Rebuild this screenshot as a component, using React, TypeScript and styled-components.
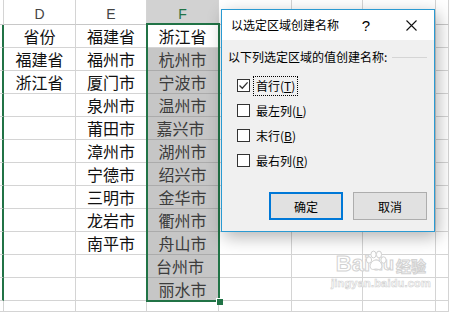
import React from 'react';
import styled, { createGlobalStyle } from 'styled-components';

const CJK = '"Noto Sans CJK SC", "Noto Sans", sans-serif';

const GlobalStyle = createGlobalStyle`
    html, body {
        margin: 0;
        padding: 0;
        background: #fff;
        overflow: hidden;
    }
`;

// G, H and I sit under the dialog, so their letters are not shown
const COLUMNS = ['', 'D', 'E', 'F', '', '', '', ''];

const D_VALUES = ['省份', '福建省', '浙江省'];
const E_VALUES = ['福建省', '福州市', '厦门市', '泉州市', '莆田市', '漳州市', '宁德市', '三明市', '龙岩市', '南平市'];
const F_VALUES = [
    { text: '浙江省', nudge: 0 },
    { text: '杭州市', nudge: 0 },
    { text: '宁波市', nudge: 0 },
    { text: '温州市', nudge: 0 },
    { text: '嘉兴市', nudge: 4 },
    { text: '湖州市', nudge: 0 },
    { text: '绍兴市', nudge: 0 },
    { text: '金华市', nudge: 0 },
    { text: '衢州市', nudge: 0 },
    { text: '舟山市', nudge: 0 },
    { text: '台州市', nudge: 5 },
    { text: '丽水市', nudge: 0 },
];

const CHECKS = [
    { label: '首行', key: 'T', checked: true, focused: true },
    { label: '最左列', key: 'L', checked: false, focused: false },
    { label: '末行', key: 'B', checked: false, focused: false },
    { label: '最右列', key: 'R', checked: false, focused: false },
];

const Page = styled.div`
    position: relative;
    width: 449px;
    height: 312px;
    overflow: hidden;
`;

const Sheet = styled.div`
    display: grid;
    grid-template-columns: 4px 72px 71px 72px 73px 71px 73px 1fr;
    grid-template-rows: 25px repeat(12, 23px) 1fr;
    width: 449px;
    height: 312px;
    font-family: ${CJK};
`;

const HeaderCell = styled.div<{ $selected?: boolean }>`
    box-sizing: border-box;
    display: flex;
    align-items: flex-end;
    justify-content: center;
    padding-bottom: 2px;
    border-right: 1px solid #d4d4d4;
    border-bottom: 1px solid #c8c8c8;
    background: ${(p) => (p.$selected ? '#d2d2d2' : '#fff')};
    color: ${(p) => (p.$selected ? '#217346' : '#444')};
    font-family: 'Liberation Sans', Arial, sans-serif;
    font-size: 14px;
    line-height: 16px;
`;

const StubCell = styled.div<{ $edge?: boolean }>`
    box-sizing: border-box;
    border-bottom: 1px solid #d4d4d4;
    border-right: ${(p) => (p.$edge ? '2px solid #217346' : '1px solid #d4d4d4')};
`;

const Cell = styled.div<{ $shaded?: boolean; $nudge?: number }>`
    box-sizing: border-box;
    display: flex;
    align-items: center;
    justify-content: center;
    padding-right: ${(p) => p.$nudge || 0}px;
    border-right: 1px solid ${(p) => (p.$shaded ? '#ababab' : '#d4d4d4')};
    border-bottom: 1px solid ${(p) => (p.$shaded ? '#ababab' : '#d4d4d4')};
    background: ${(p) => (p.$shaded ? '#c6c6c6' : '#fff')};
    color: ${(p) => (p.$shaded ? '#3c3c3c' : '#111')};
    font-size: 16px;
    line-height: 20px;
    white-space: nowrap;
    overflow: hidden;
`;

const Selection = styled.div`
    position: absolute;
    left: 146px;
    top: 23px;
    width: 74px;
    height: 279px;
    box-sizing: border-box;
    border: 2px solid #217346;
    pointer-events: none;
`;

const FillHandle = styled.span`
    position: absolute;
    right: -5px;
    bottom: -5px;
    width: 6px;
    height: 6px;
    background: #217346;
    border: 1px solid #fff;
    border-right: none;
    border-bottom: none;
`;

const Dialog = styled.div`
    position: absolute;
    left: 221px;
    top: 9px;
    width: 214px;
    height: 223px;
    box-sizing: border-box;
    border: 1px solid #2a9ad2;
    background: #f0f0f0;
    box-shadow: 3px 5px 16px rgba(0, 0, 0, 0.3);
    display: flex;
    flex-direction: column;
    font-family: ${CJK};
    color: #000;
`;

const TitleBar = styled.div`
    display: flex;
    align-items: center;
    height: 30px;
    background: #fff;
    padding-left: 9px;
    font-size: 12px;
`;

const Title = styled.span`
    flex: 1;
    line-height: 16px;
`;

const TitleButton = styled.span<{ $width: number }>`
    width: ${(p) => p.$width}px;
    height: 30px;
    display: flex;
    align-items: center;
    justify-content: center;
    font-family: 'Liberation Sans', Arial, sans-serif;
    font-size: 15px;
`;

const Body = styled.div`
    flex: 1;
    display: flex;
    flex-direction: column;
    padding: 9px 7px 11px 6px;
`;

const GroupLabel = styled.div`
    display: flex;
    align-items: center;
    font-size: 12px;
    line-height: 16px;
    height: 16px;

    &::after {
        content: '';
        flex: 1;
        height: 1px;
        background: #d5d5d5;
        margin-left: 5px;
    }
`;

const CheckList = styled.div`
    display: flex;
    flex-direction: column;
    gap: 4px;
    margin-top: 10px;
    padding-left: 9px;
`;

const CheckRow = styled.div`
    display: flex;
    align-items: center;
    height: 21px;
`;

const Box = styled.span`
    width: 13px;
    height: 13px;
    box-sizing: border-box;
    border: 1px solid #333;
    background: #fff;
    display: flex;
    align-items: center;
    justify-content: center;
`;

const CheckLabel = styled.span<{ $focused?: boolean }>`
    margin-left: 3px;
    padding: 1px 2px;
    font-size: 12px;
    line-height: 16px;
    border: 1px dotted ${(p) => (p.$focused ? '#000' : 'transparent')};
`;

const Buttons = styled.div`
    margin-top: auto;
    display: flex;
    justify-content: flex-end;
    gap: 10px;
`;

const Button = styled.button<{ $primary?: boolean }>`
    width: 74px;
    height: 28px;
    box-sizing: border-box;
    background: #e1e1e1;
    border: ${(p) => (p.$primary ? '2px solid #0078d7' : '1px solid #adadad')};
    font-family: ${CJK};
    font-size: 12px;
    color: #000;
    padding: 0;
`;

const Watermark = styled.div`
    position: absolute;
    left: 331px;
    top: 253px;
    display: flex;
    flex-direction: column;
    align-items: center;
    color: rgba(255, 255, 255, 0.9);
    pointer-events: none;
`;

const MarkLine = styled.div`
    display: flex;
    align-items: flex-end;
    gap: 2px;
    -webkit-text-stroke: 1px #d2d2d2;
    font-family: 'Liberation Sans', Arial, sans-serif;
    font-weight: bold;
    font-size: 22px;
    line-height: 22px;
`;

const MarkSmall = styled.span`
    font-size: 18px;
`;

const MarkChinese = styled.span`
    font-family: ${CJK};
    font-size: 15px;
    line-height: 18px;
    font-weight: bold;
`;

const MarkUrl = styled.div`
    margin-top: 2px;
    font-family: 'Liberation Sans', Arial, sans-serif;
    font-size: 11px;
    font-weight: bold;
    -webkit-text-stroke: 0.6px #d2d2d2;
    letter-spacing: 0.2px;
`;

const PawIcon = styled.svg`
    position: absolute;
    left: 33px;
    top: -3px;
`;

const Paw = () => (
    <PawIcon width="24" height="22" viewBox="0 0 24 22">
        <g fill="#fff" stroke="#d2d2d2" strokeWidth="1">
            <ellipse cx="5" cy="10" rx="2.6" ry="3.2" />
            <ellipse cx="9.5" cy="4.5" rx="2.6" ry="3.4" />
            <ellipse cx="15" cy="4.5" rx="2.6" ry="3.4" />
            <ellipse cx="19.5" cy="10" rx="2.6" ry="3.2" />
            <path d="M12 10 C8 10 5 15 6.5 18 C8 20.5 10.5 19 12 19 C13.5 19 16 20.5 17.5 18 C19 15 16 10 12 10 Z" />
        </g>
    </PawIcon>
);

const CheckMark = () => (
    <svg width="11" height="11" viewBox="0 0 11 11">
        <path d="M1.5 5.5 L4.3 8.3 L9.6 2.4" fill="none" stroke="#333" strokeWidth="1.3" />
    </svg>
);

const CloseIcon = () => (
    <svg width="11" height="11" viewBox="0 0 11 11">
        <path d="M0.5 0.5 L10.5 10.5 M10.5 0.5 L0.5 10.5" stroke="#111" strokeWidth="1.1" />
    </svg>
);

const App = () => {
    const rows = Array.from({ length: 13 }, (_, i) => i);
    return (
        <Page>
            <GlobalStyle />
            <Sheet>
                {COLUMNS.map((col, i) => (
                    <HeaderCell key={`h${i}`} $selected={col === 'F'}>
                        {col}
                    </HeaderCell>
                ))}
                {rows.map((r) => {
                    const f = F_VALUES[r];
                    return (
                        <React.Fragment key={r}>
                            <StubCell $edge={r < 12} />
                            <Cell>{D_VALUES[r]}</Cell>
                            <Cell>{E_VALUES[r]}</Cell>
                            <Cell $shaded={r > 0 && r < 12} $nudge={f ? f.nudge : 0}>
                                {f ? f.text : ''}
                            </Cell>
                            <Cell />
                            <Cell />
                            <Cell />
                            <Cell />
                        </React.Fragment>
                    );
                })}
            </Sheet>

            <Selection>
                <FillHandle />
            </Selection>

            <Watermark>
                <Paw />
                <MarkLine>
                    <span>Bai</span>
                    <MarkSmall>du</MarkSmall>
                    <MarkChinese>经验</MarkChinese>
                </MarkLine>
                <MarkUrl>jingyan.baidu.com</MarkUrl>
            </Watermark>

            <Dialog>
                <TitleBar>
                    <Title>以选定区域创建名称</Title>
                    <TitleButton $width={44}>?</TitleButton>
                    <TitleButton $width={46}>
                        <CloseIcon />
                    </TitleButton>
                </TitleBar>
                <Body>
                    <GroupLabel>以下列选定区域的值创建名称:</GroupLabel>
                    <CheckList>
                        {CHECKS.map((c) => (
                            <CheckRow key={c.key}>
                                <Box>{c.checked && <CheckMark />}</Box>
                                <CheckLabel $focused={c.focused}>
                                    {c.label}(<u>{c.key}</u>)
                                </CheckLabel>
                            </CheckRow>
                        ))}
                    </CheckList>
                    <Buttons>
                        <Button $primary>确定</Button>
                        <Button>取消</Button>
                    </Buttons>
                </Body>
            </Dialog>
        </Page>
    );
};

export default App;
